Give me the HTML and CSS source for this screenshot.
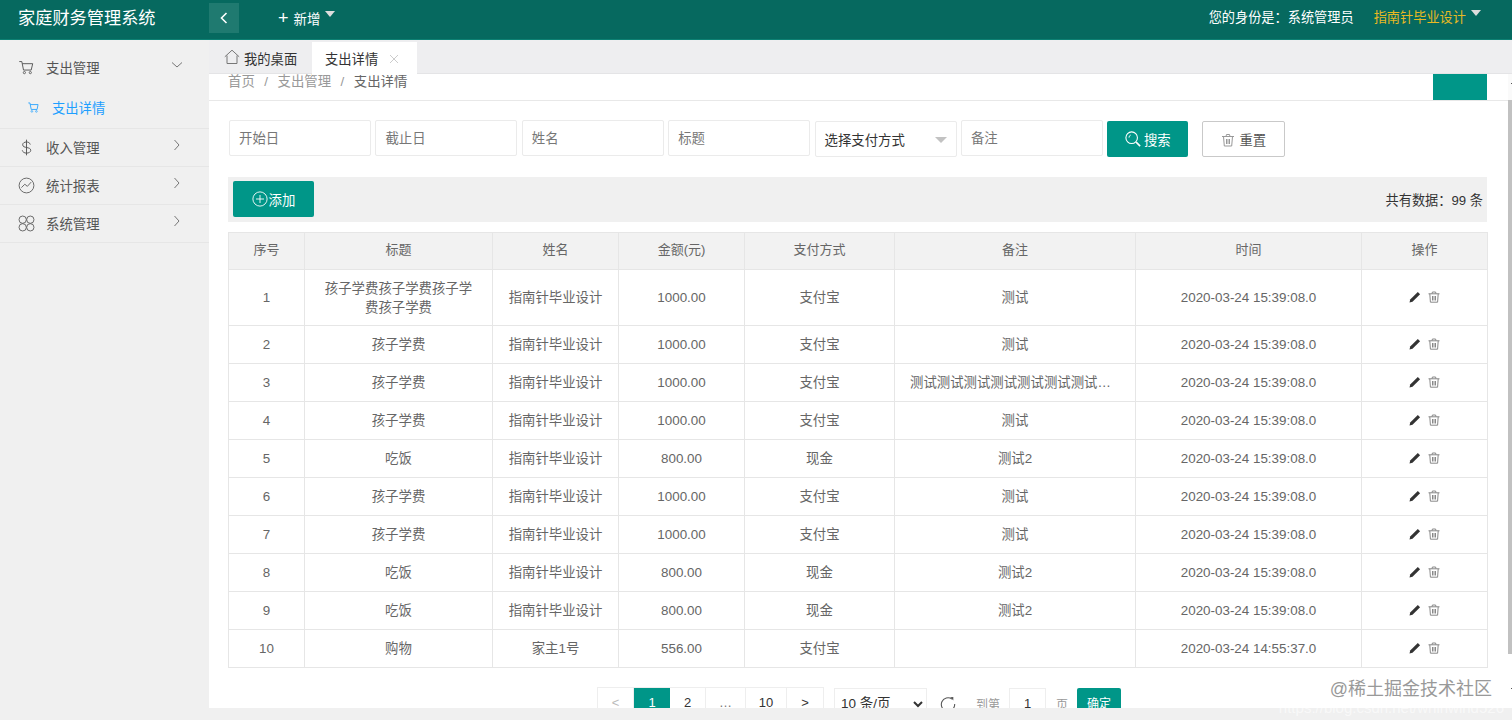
FILE: index.html
```html
<!DOCTYPE html>
<html lang="zh-CN">
<head>
<meta charset="utf-8">
<title>家庭财务管理系统</title>
<link rel="stylesheet" href="styles.css">
</head>
<body>
<header class="topbar">
  <div class="logo">家庭财务管理系统</div>
  <button class="collapse"><svg width="10" height="14" viewBox="0 0 10 14"><path d="M7.5 2 2.5 7l5 5" fill="none" stroke="#fff" stroke-width="1.6"/></svg></button>
  <div class="add"><span class="plus">+</span> 新增<span class="caret"></span></div>
  <div class="top-right">
    <span>您的身份是<span class="fw">：</span>系统管理员</span>
    <span class="user">指南针毕业设计<span class="caret"></span></span>
  </div>
</header>
<div class="body">
  <aside class="side">
    <div class="group open">
      <div class="menu-item">
        <svg class="mi" viewBox="0 0 20 20"><path d="M1.500 3h3l2 10h9l1.800-7.500H5" fill="none" stroke="#555" stroke-width="1.100"/><circle cx="7.500" cy="16" r="1.300" fill="none" stroke="#555"/><circle cx="14.500" cy="16" r="1.300" fill="none" stroke="#555"/></svg>
        <span>支出管理</span>
        <svg class="chev" viewBox="0 0 12 12"><path d="M1 3.500 6 8l5-4.500" fill="none" stroke="#777"/></svg>
      </div>
      <div class="sub-item">
        <svg class="si" viewBox="0 0 20 20"><path d="M2 3h2.500l2 10h9l1.500-7.500H5" fill="none" stroke="#1e9fff" stroke-width="1.300"/><circle cx="7.500" cy="16" r="1.300" fill="none" stroke="#1e9fff"/><circle cx="14.500" cy="16" r="1.300" fill="none" stroke="#1e9fff"/></svg>
        <span>支出详情</span>
      </div>
    </div>
    <div class="group">
      <div class="menu-item">
        <svg class="mi" viewBox="0 0 20 20"><path d="M14.500 6.500C14 4.500 12 3.500 10 3.500c-2.500 0-4.500 1.300-4.500 3.300 0 4.500 9.500 2 9.500 6.500 0 2-2.200 3.300-5 3.300-2.500 0-4.500-1.200-5-3.300M10 .8v18.400" fill="none" stroke="#555" stroke-width="1.100"/></svg>
        <span>收入管理</span>
        <svg class="chev" viewBox="0 0 12 12"><path d="M3.500 1 8 6l-4.500 5" fill="none" stroke="#777"/></svg>
      </div>
    </div>
    <div class="group">
      <div class="menu-item">
        <svg class="mi" viewBox="0 0 20 20"><circle cx="10" cy="10" r="8.700" fill="none" stroke="#555"/><path d="M4 12.500 8 8.500l3 2.500 4.500-5" fill="none" stroke="#555"/></svg>
        <span>统计报表</span>
        <svg class="chev" viewBox="0 0 12 12"><path d="M3.500 1 8 6l-4.500 5" fill="none" stroke="#777"/></svg>
      </div>
    </div>
    <div class="group">
      <div class="menu-item">
        <svg class="mi" viewBox="0 0 20 20"><g fill="none" stroke="#555"><circle cx="5.500" cy="5.500" r="4.300"/><circle cx="14.500" cy="5.500" r="4.300"/><circle cx="5.500" cy="14.500" r="4.300"/><circle cx="14.500" cy="14.500" r="4.300"/></g></svg>
        <span>系统管理</span>
        <svg class="chev" viewBox="0 0 12 12"><path d="M3.500 1 8 6l-4.500 5" fill="none" stroke="#777"/></svg>
      </div>
    </div>
  </aside>
  <div class="workspace">
    <nav class="tabs">
      <div class="tab"><svg class="home" viewBox="0 0 16 16"><path d="M.8 7.800 8 1.200l7.200 6.600M3 6.500V14.500h10V6.500" fill="none" stroke="#777"/></svg>我的桌面</div>
      <div class="tab active">支出详情<svg class="close" viewBox="0 0 10 10"><path d="m1 1 8 8M9 1 1 9" stroke="#ccc"/></svg></div>
    </nav>
    <main class="main">
      <div class="crumb-row">
        <div class="crumbs"><span>首页</span><i>/</i><span>支出管理</span><i>/</i><span class="now">支出详情</span></div>
        <div class="refresh"></div>
      </div>
      <div class="content">
        <form class="filters">
          <div class="field">开始日</div>
          <div class="field">截止日</div>
          <div class="field">姓名</div>
          <div class="field">标题</div>
          <div class="field select">选择支付方式<span class="sel-caret"></span></div>
          <div class="field">备注</div>
          <div class="btn primary"><svg class="b-ic" viewBox="0 0 18 18"><circle cx="7.500" cy="7.500" r="6.500" fill="none" stroke="#fff" stroke-width="1.200"/><path d="m12.500 12.500 4.500 4.500" stroke="#fff" stroke-width="1.800"/><path d="M4.500 7.500a3 3 0 0 1 2-3" fill="none" stroke="#fff"/></svg>搜索</div>
          <div class="btn ghost"><svg class="t-ic" viewBox="0 0 14 14"><path d="M1 3.500h12M5 3.500 5.500 1.500h3L9 3.500M2.500 3.500l.8 9.500h7.400l.8-9.500M5.500 6v5M7 6v5M8.500 6v5" fill="none" stroke="#999"/></svg>重置</div>
        </form>
        <div class="toolbar">
          <div class="btn add-btn"><svg class="a-ic" viewBox="0 0 18 18"><circle cx="9" cy="9" r="8" fill="none" stroke="#fff"/><path d="M9 4.500v9M4.500 9h9" stroke="#fff"/></svg>添加</div>
          <div class="count">共有数据<span class="fw">：</span>99 条</div>
        </div>
        <table class="grid">
          <colgroup>
            <col class="c1"><col class="c2"><col class="c3"><col class="c4"><col class="c5"><col class="c6"><col class="c7"><col class="c8">
          </colgroup>
          <thead>
            <tr><th>序号</th><th>标题</th><th>姓名</th><th>金额(元)</th><th>支付方式</th><th>备注</th><th>时间</th><th>操作</th></tr>
          </thead>
          <tbody id="rows"></tbody>
        </table>
        <div class="pager">
          <div class="pages">
            <span class="pg muted">&lt;</span><span class="pg cur">1</span><span class="pg">2</span><span class="pg dots">…</span><span class="pg ten">10</span><span class="pg">&gt;</span>
          </div>
          <select class="limit"><option>10 条/页</option></select>
          <svg class="reload" viewBox="0 0 18 18"><path d="M13.500 3.500A7.500 7.500 0 1 0 16.500 9" fill="none" stroke="#555" stroke-width="1.200"/><path d="M11.500 1.500 15 1v4z" fill="#555"/></svg>
          <span class="goto">到第</span>
          <span class="page-in">1</span>
          <span class="goto">页</span>
          <span class="ok">确定</span>
        </div>
      </div>
    </main>
    <div class="scrollbar"><div class="arrow"></div><div class="thumb"></div><div class="arrow low"></div></div>
  </div>
</div>
<div class="mark">
  <div class="mark-a">@稀土掘金技术社区</div>
  <div class="mark-b">https://blog.csdn.net/whirlwind526</div>
</div>
<script src="app.js"></script>
</body>
</html>
```

FILE: app.js
```js
var data = [
  ["1","孩子学费孩子学费孩子学费孩子学费","指南针毕业设计","1000.00","支付宝","测试","2020-03-24 15:39:08.0"],
  ["2","孩子学费","指南针毕业设计","1000.00","支付宝","测试","2020-03-24 15:39:08.0"],
  ["3","孩子学费","指南针毕业设计","1000.00","支付宝","测试测试测试测试测试测试测试测试测试测试","2020-03-24 15:39:08.0"],
  ["4","孩子学费","指南针毕业设计","1000.00","支付宝","测试","2020-03-24 15:39:08.0"],
  ["5","吃饭","指南针毕业设计","800.00","现金","测试2","2020-03-24 15:39:08.0"],
  ["6","孩子学费","指南针毕业设计","1000.00","支付宝","测试","2020-03-24 15:39:08.0"],
  ["7","孩子学费","指南针毕业设计","1000.00","支付宝","测试","2020-03-24 15:39:08.0"],
  ["8","吃饭","指南针毕业设计","800.00","现金","测试2","2020-03-24 15:39:08.0"],
  ["9","吃饭","指南针毕业设计","800.00","现金","测试2","2020-03-24 15:39:08.0"],
  ["10","购物","家主1号","556.00","支付宝","","2020-03-24 14:55:37.0"]
];
var ops = '<span class="ops"><svg class="op" viewBox="0 0 12 12"><path d="M.5 11.500l.7-3L8.800.9l2.300 2.300-7.600 7.600z" fill="#333"/></svg><svg class="op" viewBox="0 0 12 12"><path d="M.5 2.800h11M4 2.800 4.400 1h3.200L8 2.800M1.800 2.800l.6 8.400h7.200l.6-8.400M4.500 5v4.500M6 5v4.500M7.500 5v4.500" fill="none" stroke="#888" stroke-width="1"/></svg></span>';
var html = "";
data.forEach(function (r) {
  html += "<tr>";
  r.forEach(function (c, i) {
    html += i === 5 && c.length > 10 ? '<td><div class="clip">' + c + "</div></td>" : "<td>" + c + "</td>";
  });
  html += "<td>" + ops + "</td></tr>";
});
document.getElementById("rows").innerHTML = html;
```

FILE: styles.css
```css
* { box-sizing: border-box; }
html, body { margin: 0; height: 720px; overflow: hidden; }
body {
  position: relative;
  font-family: "Liberation Sans", "Noto Sans CJK SC", sans-serif;
  font-size: 13.4px;
  color: #666;
  background: #f0f0f0;
  display: flex;
  flex-direction: column;
  text-spacing-trim: space-all;
}
.fw { font-family: "Noto Sans CJK TC", sans-serif; }
.topbar {
  height: 40px;
  flex: none;
  background: #06695f;
  border-bottom: 1px solid #0d8073;
  color: #fff;
  display: flex;
  align-items: center;
}
.logo { width: 209px; padding-left: 18px; font-size: 17.2px; margin-top: -6px; }
.collapse {
  width: 30px; height: 30px; margin-top: -4px; border: 0; padding: 0;
  background: #1f7a70; display: flex; align-items: center; justify-content: center;
}
.add { margin-left: 39px; margin-top: -4px; font-size: 13.4px; display: flex; align-items: center; }
.plus { font-size: 18px; line-height: 18px; margin-right: 5px; }
.caret {
  display: inline-block; width: 0; height: 0; margin-left: 5px; margin-top: -8px;
  border: 5px solid transparent; border-top: 6px solid #ddd; border-bottom: 0;
}
.top-right { margin-left: auto; padding-right: 31px; display: flex; gap: 20px; font-size: 13.2px; margin-top: -6px; }
.user { color: #e8b923; display: flex; align-items: center; }
.body { flex: 1; display: flex; min-height: 0; }
.side { width: 209px; flex: none; background: #f0f0f0; padding-top: 9px; }
.group { border-bottom: 1px solid #e6e6e6; height: 38px; }
.group.open { height: 80px; }
.menu-item { height: 38px; display: flex; align-items: center; padding: 0 0 2px 18px; font-size: 13.4px; color: #555; position: relative; }
.menu-item > span { margin-left: 11px; }
.mi { width: 17px; height: 17px; flex: none; }
.chev { position: absolute; left: 171px; top: 10px; width: 12px; height: 12px; }
.sub-item { height: 40px; display: flex; align-items: center; padding-left: 27px; color: #1e9fff; font-size: 13.3px; gap: 12px; }
.si { width: 13px; height: 13px; }
.workspace { flex: 1; position: relative; display: flex; flex-direction: column; min-width: 0; padding-bottom: 12px; }
.tabs { height: 34px; flex: none; background: #eeeef0; border-bottom: 1px solid #e4e4e6; display: flex; padding-top: 2px; position: relative; z-index: 2; }
.tab { height: 32px; padding: 0 15px; display: flex; align-items: center; font-size: 13.3px; color: #333; white-space: nowrap; }
.tab:first-child { padding-left: 15px; width: 103px; }
.tab.active { background: #fff; width: 105px; padding: 0 13px; height: 33px; }
.home { width: 16px; height: 16px; margin-right: 4px; margin-top: -2px; flex: none; }
.close { width: 10px; height: 10px; margin-left: 11px; flex: none; }
.main { flex: 1; background: #fff; overflow: hidden; margin-right: 4px; min-height: 0; }
.crumb-row { height: 27px; border-bottom: 1px solid #e8e8e8; position: relative; padding-left: 19px; overflow: hidden; }
.crumbs { font-size: 13.4px; line-height: 15px; color: #999; display: flex; }
.crumbs i { font-style: normal; margin: 0 9.5px; }
.crumbs .now { color: #666; }
.refresh { position: absolute; left: 1224px; top: 0; width: 54px; height: 26px; background: #009688; }
.content { padding: 19px 0 0 19px; width: 1278px; }
.filters { display: flex; align-items: flex-start; height: 36px; padding-left: 1px; }
.field {
  width: 142px; height: 36px; margin-right: 4.4px; padding: 0 9px;
  border: 1px solid #ebebeb; border-radius: 2px; background: #fff;
  line-height: 36px; font-size: 13.4px; color: #777; flex: none;
}
.field.select { position: relative; color: #333; margin-top: 1px; padding-top: 1px; }
.sel-caret { position: absolute; right: 9px; top: 15px; border: 6px solid transparent; border-top: 6px solid #c2c2c2; border-bottom: 0; }
.btn { display: flex; align-items: center; justify-content: center; border-radius: 2px; font-size: 13.4px; flex: none; }
.primary { width: 81px; height: 36px; background: #009688; color: #fff; margin-top: 1px; gap: 3px; }
.ghost { width: 83px; height: 36px; margin-left: 14px; margin-top: 1px; border: 1px solid #c9c9c9; color: #555; gap: 4px; }
.b-ic { width: 16px; height: 16px; }
.t-ic { width: 14px; height: 14px; margin-top: 2px; }
.toolbar {
  margin-top: 21px; height: 45px; width: 1259px; background: #f0f0f0; display: flex; align-items: flex-start;
  justify-content: space-between; padding: 4px 4px 0 5px;
}
.add-btn { width: 81px; height: 36px; background: #009688; color: #fff; gap: 1px; }
.a-ic { width: 16px; height: 16px; }
.count { color: #333; font-size: 13.2px; line-height: 38px; }
.grid { margin-top: 10px; width: 1259px; border-collapse: collapse; table-layout: fixed; }
.c1 { width: 76px; } .c2 { width: 188px; } .c3 { width: 126px; } .c4 { width: 126px; }
.c5 { width: 150px; } .c6 { width: 241px; } .c7 { width: 226px; } .c8 { width: 126px; }
.grid th, .grid td { border: 1px solid #e6e6e6; text-align: center; padding: 0 15px; font-weight: 400; font-size: 13.4px; color: #666; line-height: 19px; }
.grid th { height: 37px; background: #f2f2f2; font-size: 13px; padding-bottom: 3px; }
.grid td { height: 38px; }
.grid tbody tr:first-child td { height: 56px; }
.grid tbody td:nth-child(2) { padding: 0 18px; }
.clip { white-space: nowrap; overflow: hidden; text-overflow: ellipsis; }
.ops { display: inline-flex; gap: 7px; align-items: center; vertical-align: -1px; }
.op { width: 12px; height: 12px; }
.pager { display: flex; align-items: center; margin-top: 19px; height: 33px; padding-left: 369px; font-size: 13px; }
.pages { display: flex; border: 1px solid #eee; height: 33px; flex: none; }
.pg { height: 31px; line-height: 30px; width: 36px; text-align: center; border-right: 1px solid #eee; color: #333; flex: none; }
.pg:last-child { border-right: 0; }
.pg.muted { color: #bbb; }
.pg.cur { background: #009688; color: #fff; border-right: 0; }
.pg.dots { color: #777; width: 40px; }
.pg.ten { width: 41px; }
.limit { margin-left: 10px; width: 93px; height: 32px; border: 1px solid #eee; background: #fff; color: #333; font: 13.5px "Liberation Sans", "Noto Sans CJK SC", sans-serif; padding-left: 2px; flex: none; }
.reload { width: 16px; height: 16px; margin-left: 13px; flex: none; }
.goto { color: #999; margin-left: 20px; font-size: 12px; }
.goto + .page-in + .goto { margin-left: 10px; }
.page-in { margin-left: 9px; width: 37px; height: 32px; line-height: 30px; text-align: center; border: 1px solid #eee; color: #333; flex: none; }
.ok { margin-left: 9px; width: 44px; height: 32px; line-height: 32px; text-align: center; color: #fff; background: #009688; border-radius: 2px; font-size: 12px; flex: none; }
.scrollbar { position: absolute; right: 0; top: 34px; bottom: 12px; width: 4px; background: #fafafa; display: flex; flex-direction: column; }
.arrow { height: 26px; flex: none; position: relative; }
.arrow::after { content: ""; position: absolute; left: 3px; top: 9px; width: 1px; height: 1px; background: #555; }
.arrow.low { height: 54px; background: #fff; }
.arrow.low::after { top: 34px; }
.thumb { flex: 1; background: #c1c1c1; }
.mark { position: absolute; left: 1274px; top: 678px; width: 238px; text-align: right; pointer-events: none; }
.mark-a { font-size: 18px; line-height: 22px; color: #999; padding-right: 20px; }
.mark-b { font-size: 15px; line-height: 15px; color: rgba(255,255,255,.6); white-space: nowrap; padding-right: 8px; }
```
